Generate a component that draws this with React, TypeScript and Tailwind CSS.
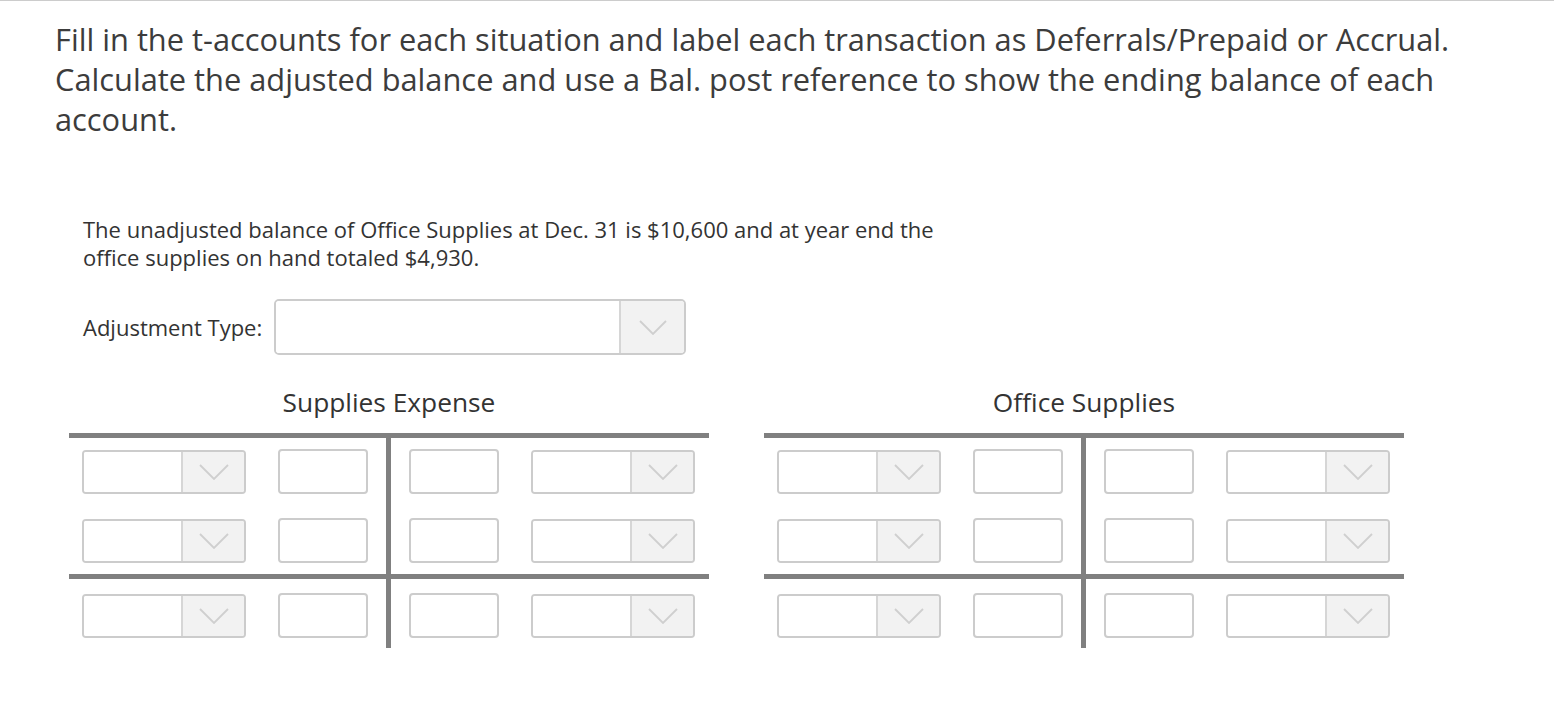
const Chevron = ({ w, h }: { w: number; h: number }) => (
  <svg width={w} height={h} viewBox={`0 0 ${w} ${h}`} fill="none">
    <path d={`M1 1 L${w / 2} ${h - 1} L${w - 1} 1`} stroke="#cfcfcf" strokeWidth="1.8" />
  </svg>
);

const Select = () => (
  <div className="flex w-[164px] h-[44px] border-2 border-[#cccccc] rounded-[4px] overflow-hidden">
    <div className="flex-1 bg-white" />
    <div className="w-[63px] bg-[#f2f2f2] border-l-2 border-[#d6d6d6] flex items-center justify-center">
      <Chevron w={30} h={16} />
    </div>
  </div>
);

const Input = () => (
  <div className="w-[90px] h-[45px] border-2 border-[#cccccc] rounded-[4px] bg-white" />
);

const LeftRow = () => (
  <div className="flex items-center pl-[13px]">
    <Select />
    <div className="ml-[32px]">
      <Input />
    </div>
  </div>
);

const RightRow = () => (
  <div className="flex items-center pl-[18px]">
    <Input />
    <div className="ml-[32px]">
      <Select />
    </div>
  </div>
);

const TAccount = ({ title }: { title: string }) => (
  <div className="w-[640px] flex flex-col">
    <div className="text-[26.3px] leading-[32px] text-[#333333] text-center mb-[15px]">{title}</div>
    <div className="h-[5px] bg-[#808080]" />
    <div className="flex">
      <div className="w-[317px] pt-[11px] pb-[11px] flex flex-col gap-[24px]">
        <LeftRow />
        <LeftRow />
      </div>
      <div className="w-[5px] bg-[#808080]" />
      <div className="flex-1 pt-[11px] pb-[11px] flex flex-col gap-[24px]">
        <RightRow />
        <RightRow />
      </div>
    </div>
    <div className="h-[5px] bg-[#808080]" />
    <div className="flex">
      <div className="w-[317px] pt-[14px] pb-[10px]">
        <LeftRow />
      </div>
      <div className="w-[5px] bg-[#808080]" />
      <div className="flex-1 pt-[14px] pb-[10px]">
        <RightRow />
      </div>
    </div>
  </div>
);

export default function App() {
  return (
    <div className="min-h-screen bg-white font-['Open_Sans',sans-serif] text-[#333333] border-t border-[#cccccc]">
      <div className="pl-[55px] pt-[18px]">
        <h1 className="w-[1420px] text-[30.8px] leading-[40px] text-[#3c3c3c] font-normal">
          Fill in the t-accounts for each situation and label each transaction as Deferrals/Prepaid or Accrual.
          Calculate the adjusted balance and use a Bal. post reference to show the ending balance of each account.
        </h1>
      </div>
      <div className="pl-[69px] pt-[76px]">
        <p className="ml-[14px] w-[880px] text-[22px] leading-[28px]">
          The unadjusted balance of Office Supplies at Dec. 31 is $10,600 and at year end the office supplies on
          hand totaled $4,930.
        </p>
        <div className="flex items-center gap-[12px] pl-[14px] mt-[28px]">
          <span className="text-[22px]">Adjustment Type:</span>
          <div className="flex w-[412px] h-[56px] border-2 border-[#cccccc] rounded-[5px] overflow-hidden">
            <div className="flex-1 bg-white" />
            <div className="w-[65px] bg-[#f2f2f2] border-l-2 border-[#d6d6d6] flex items-center justify-center">
              <Chevron w={28} h={15} />
            </div>
          </div>
        </div>
        <div className="flex gap-[55px] mt-[31px]">
          <TAccount title="Supplies Expense" />
          <TAccount title="Office Supplies" />
        </div>
      </div>
    </div>
  );
}
